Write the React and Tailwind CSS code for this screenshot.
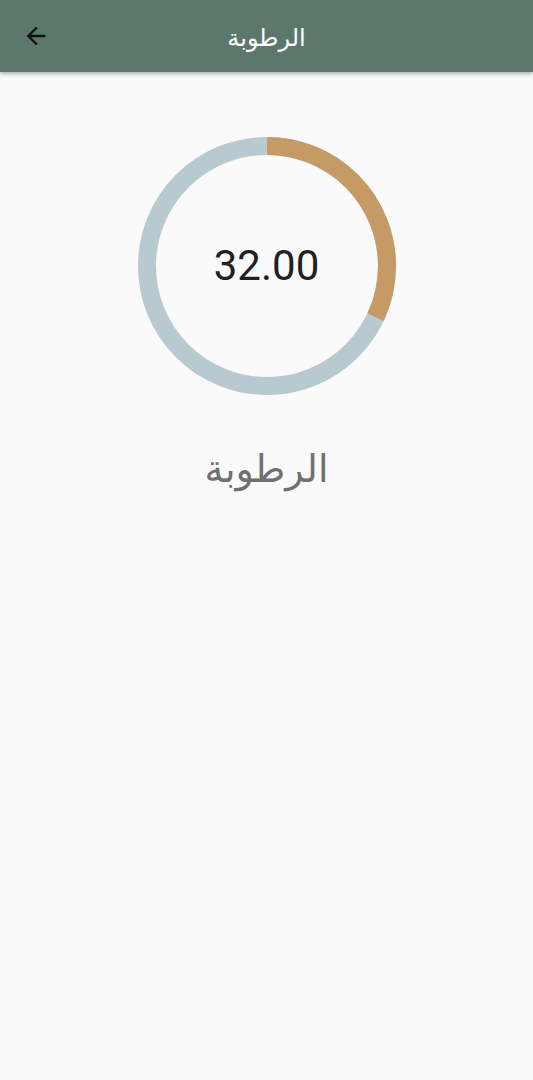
import React from "react";

export default function App() {
  const r = 120;
  const c = 2 * Math.PI * r;
  const pct = 0.32;
  return (
    <div className="w-[533px] h-[1080px] bg-[#fafafa] flex flex-col" style={{ fontFamily: "Roboto, 'DejaVu Sans', sans-serif" }}>
      <div className="h-[72px] bg-[#5c786d] shadow-[0_2px_4px_rgba(0,0,0,0.3)] flex items-center relative z-10">
        <div className="w-[72px] flex justify-center">
          <svg width="28" height="28" viewBox="0 0 24 24">
            <path d="M20 11H7.83l5.59-5.59L12 4l-8 8 8 8 1.41-1.41L7.83 13H20v-2z" fill="#111" />
          </svg>
        </div>
        <div className="flex-1 flex justify-center mr-[72px]">
          <span className="text-white text-[24px] leading-none pt-[4px]" dir="rtl">الرطوبة</span>
        </div>
      </div>
      <div className="flex flex-col items-center pt-[64px]">
        <div className="relative w-[260px] h-[260px]">
          <svg width="260" height="260" viewBox="0 0 260 260">
            <circle cx="130" cy="130" r={r} fill="none" stroke="#b8c9d0" strokeWidth="18" />
            <circle
              cx="130"
              cy="130"
              r={r}
              fill="none"
              stroke="#c69a64"
              strokeWidth="18"
              strokeDasharray={`${c * pct} ${c}`}
              transform="rotate(-90 130 130)"
            />
          </svg>
          <div className="absolute inset-0 flex items-center justify-center">
            <span className="text-[42px] text-[#212121] leading-none" style={{ fontFamily: "Roboto, sans-serif" }}>32.00</span>
          </div>
        </div>
        <div className="mt-[54px] text-[38px] text-[#707070] leading-none" dir="rtl">الرطوبة</div>
      </div>
    </div>
  );
}
